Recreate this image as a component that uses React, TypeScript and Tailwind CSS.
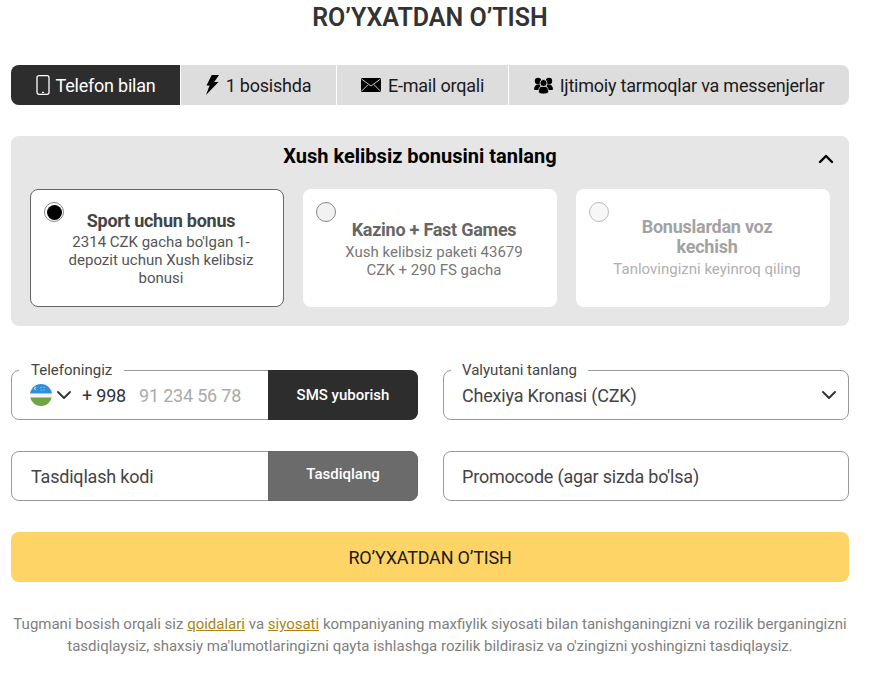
import { ChevronDown, ChevronUp } from "lucide-react";

function PhoneIcon() {
  return (
    <svg width="14" height="20" viewBox="0 0 14 20" fill="none">
      <rect x="1" y="0.7" width="12" height="18.6" rx="2" stroke="#fff" strokeWidth="1.3" />
      <rect x="6" y="16.8" width="2" height="1.2" fill="#fff" />
    </svg>
  );
}

function BoltIcon() {
  return (
    <svg width="13" height="20" viewBox="0 0 13 20" fill="#000">
      <path d="M5.7 0H13L8.3 7h4.2L0 20l3.6-9.5H0.5z" />
    </svg>
  );
}

function MailIcon() {
  return (
    <svg width="20" height="14" viewBox="0 0 20 14">
      <rect width="20" height="14" rx="1" fill="#000" />
      <path d="M0.5 1l9.5 7 9.5-7M0.5 13.2l6.6-6.6M19.5 13.2l-6.6-6.6" fill="none" stroke="#ddd" strokeWidth="0.9" />
    </svg>
  );
}

function UsersIcon() {
  return (
    <svg width="19" height="17" viewBox="0 0 19 17" fill="#000">
      <circle cx="4" cy="4" r="3.2" />
      <circle cx="15" cy="4" r="3.2" />
      <path d="M0 12.5C0 9.5 1.500 7.500 4 7.500h2v5.500H1z" />
      <path d="M19 12.500c0-3-1.500-5-4-5h-2v5.500h5z" />
      <circle cx="9.500" cy="6" r="3.500" stroke="#ddd" strokeWidth="0.8" />
      <path d="M4.500 14.500c0-3 1.300-5 3-5h4c1.700 0 3 2 3 5 0 1.800-2 2.500-5 2.500s-5-.7-5-2.500z" stroke="#ddd" strokeWidth="0.8" />
    </svg>
  );
}

const tabs = [
  { label: "1 bosishda", icon: <BoltIcon />, w: "w-[156px]" },
  { label: "E-mail orqali", icon: <MailIcon />, w: "w-[172px]" },
  { label: "Ijtimoiy tarmoqlar va messenjerlar", icon: <UsersIcon />, w: "flex-1" },
];

function Flag() {
  return (
    <svg width="22" height="22" viewBox="0 0 22 22">
      <defs>
        <clipPath id="flag-clip">
          <circle cx="11" cy="11" r="11" />
        </clipPath>
      </defs>
      <g clipPath="url(#flag-clip)">
        <rect width="22" height="9" fill="#2f8fdc" />
        <rect y="9" width="22" height="5" fill="#f8f4f4" />
        <rect y="9" width="22" height="0.9" fill="#e8a0a8" />
        <rect y="13.100" width="22" height="0.9" fill="#e8a0a8" />
        <rect y="14" width="22" height="8" fill="#6fa545" />
        <circle cx="6" cy="4.500" r="1.800" fill="#dfeefa" />
        <circle cx="6.800" cy="4.500" r="1.600" fill="#2f8fdc" />
        <circle cx="11" cy="3.500" r="0.500" fill="#dfeefa" />
        <circle cx="14" cy="3.500" r="0.500" fill="#dfeefa" />
        <circle cx="11" cy="6" r="0.500" fill="#dfeefa" />
        <circle cx="14" cy="6" r="0.500" fill="#dfeefa" />
      </g>
    </svg>
  );
}

function App() {
  return (
    <div className="w-[871px] h-[698px] bg-white overflow-hidden font-['Roboto',sans-serif] text-[#333]">
      <div className="w-[838px] ml-[11px]">
        <h1 className="h-[37px] text-center text-[25px] leading-[36px] font-semibold text-[#333]">RO’YXATDAN O’TISH</h1>

        <div className="mt-[28px] h-[40px] flex rounded-lg overflow-hidden bg-[#dddddd] text-[18px] tracking-[-0.22px] text-[#1a1a1a]">
          <div className="w-[169px] flex items-center justify-center gap-[6px] bg-[#2d2d2d] text-white">
            <PhoneIcon />
            <span>Telefon bilan</span>
          </div>
          {tabs.map((t) => (
            <div key={t.label} className={`${t.w} flex items-center justify-center gap-[7px] border-l border-white`}>
              {t.icon}
              <span>{t.label}</span>
            </div>
          ))}
        </div>

        <div className="mt-[31px] h-[190px] rounded-lg bg-[#e6e6e6] px-[19px]">
          <div className="h-[53px] relative flex items-start justify-center pr-[20px]">
            <span className="mt-[7px] text-[20px] leading-[26px] font-bold text-black">Xush kelibsiz bonusini tanlang</span>
            <ChevronUp size={24} strokeWidth={2.4} className="absolute right-[-8px] top-[11px] text-black" />
          </div>
          <div className="flex gap-[19px]">
            <div className="relative w-[254px] h-[118px] rounded-lg border border-[#666] bg-white flex flex-col items-center justify-center text-center pl-[36px] pr-[28px]">
              <span className="absolute left-[13px] top-[12px] w-[20px] h-[20px] rounded-full border border-[#888] flex items-center justify-center">
                <span className="w-[15px] h-[15px] rounded-full bg-black" />
              </span>
              <div className="text-[18px] leading-[22px] font-bold text-[#444] tracking-[-0.25px] whitespace-nowrap">Sport uchun bonus</div>
              <div className="mt-[1px] text-[15px] leading-[18px] text-[#555]">2314 CZK gacha bo'lgan 1-depozit uchun Xush kelibsiz bonusi</div>
            </div>
            <div className="relative w-[254px] h-[118px] rounded-lg bg-white flex flex-col items-center justify-center text-center pl-[37px] pr-[29px]">
              <span className="absolute left-[13px] top-[13px] w-[20px] h-[20px] rounded-full border border-[#888] bg-[#f2f2f2]" />
              <div className="text-[18px] leading-[22px] font-bold text-[#666] tracking-[-0.25px] whitespace-nowrap mt-[1px]">Kazino + Fast Games</div>
              <div className="mt-[2px] text-[15px] leading-[18px] text-[#777]">Xush kelibsiz paketi 43679 CZK + 290 FS gacha</div>
            </div>
            <div className="relative w-[254px] h-[118px] rounded-lg bg-white flex flex-col items-center justify-center text-center pl-[37px] pr-[29px]">
              <span className="absolute left-[13px] top-[13px] w-[20px] h-[20px] rounded-full border border-[#bbb] bg-[#f7f7f7]" />
              <div className="text-[18px] leading-[20px] font-bold text-[#a3a3a3] tracking-[-0.25px]">Bonuslardan voz kechish</div>
              <div className="text-[15px] leading-[19px] text-[#b0b0b0] mt-[3px]">Tanlovingizni keyinroq qiling</div>
            </div>
          </div>
        </div>

        <div className="mt-[44px] grid grid-cols-[407px_406px] gap-x-[25px] gap-y-[31px] text-[18px] tracking-[-0.2px] text-[#444]">
          <div className="relative h-[50px] rounded-lg border border-[#999] flex items-center">
            <span className="absolute left-[7px] -top-[10px] bg-white px-[12px] text-[15px] leading-[18px] tracking-normal text-[#444]">Telefoningiz</span>
            <div className="flex items-center pl-[18px] flex-1">
              <Flag />
              <ChevronDown size={24} strokeWidth={1.9} className="text-[#333]" />
              <span className="ml-[6px] text-[#333]">+ 998</span>
              <span className="ml-[13px] text-[#aaa]">91 234 56 78</span>
            </div>
            <div className="w-[150px] h-[50px] -mr-px rounded-r-lg bg-[#2d2d2d] text-white text-[15px] tracking-normal font-medium flex items-center justify-center">SMS yuborish</div>
          </div>

          <div className="relative h-[50px] rounded-lg border border-[#999] flex items-center justify-between pl-[18px] pr-[7px]">
            <span className="absolute left-[7px] -top-[10px] bg-white px-[11px] text-[15px] leading-[18px] tracking-normal">Valyutani tanlang</span>
            <span>Chexiya Kronasi (CZK)</span>
            <ChevronDown size={24} strokeWidth={2} className="text-[#333]" />
          </div>

          <div className="h-[50px] rounded-lg border border-[#999] flex items-center">
            <span className="pl-[19px] flex-1">Tasdiqlash kodi</span>
            <div className="w-[150px] h-[50px] -mr-px rounded-r-lg bg-[#6b6b6b] border border-[#666] text-white text-[15px] tracking-normal font-medium flex items-center justify-center pb-[3px]">Tasdiqlang</div>
          </div>

          <div className="h-[50px] rounded-lg border border-[#999] flex items-center pl-[18px]">Promocode (agar sizda bo'lsa)</div>
        </div>

        <div className="mt-[31px] h-[50px] rounded-lg bg-[#ffd466] flex items-center justify-center text-[18px] tracking-[-0.2px] text-[#1a1a1a]">RO’YXATDAN O’TISH</div>

        <p className="mt-[31px] text-center text-[15px] leading-[22px] text-[#808080]">
          Tugmani bosish orqali siz <span className="text-[#a8870f] underline">qoidalari</span> va <span className="text-[#a8870f] underline">siyosati</span> kompaniyaning maxfiylik siyosati bilan tanishganingizni va rozilik berganingizni tasdiqlaysiz, shaxsiy ma'lumotlaringizni qayta ishlashga rozilik bildirasiz va o'zingizni yoshingizni tasdiqlaysiz.
        </p>
      </div>
    </div>
  );
}

export default App;
